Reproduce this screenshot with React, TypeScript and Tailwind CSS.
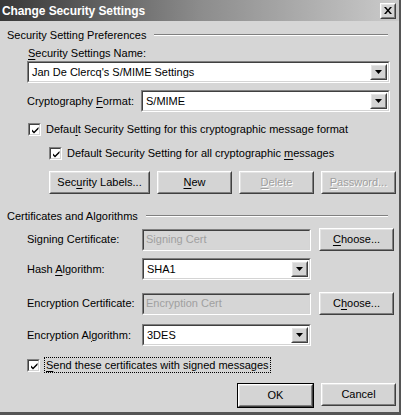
import React from "react";

const font = { fontFamily: '"Liberation Sans", Arial, sans-serif' };

function U({ children }: { children: React.ReactNode }) {
  return <span className="underline underline-offset-[2px]">{children}</span>;
}

function Sunken({ className = "", children }: { className?: string; children?: React.ReactNode }) {
  return (
    <div className={`border border-t-[#808080] border-l-[#808080] border-b-white border-r-white ${className}`}>
      <div className="h-full w-full border border-t-[#404040] border-l-[#404040] border-b-[#d4d4d4] border-r-[#d4d4d4]">
        {children}
      </div>
    </div>
  );
}

function Raised({ className = "", children }: { className?: string; children?: React.ReactNode }) {
  return (
    <div className={`border border-t-white border-l-white border-b-[#404040] border-r-[#404040] ${className}`}>
      <div className="flex h-full w-full items-center justify-center border border-t-[#e4e4e4] border-l-[#e4e4e4] border-b-[#808080] border-r-[#808080] bg-[#d4d4d4]">
        {children}
      </div>
    </div>
  );
}

function Arrow() {
  return (
    <Raised className="h-full w-[17px] shrink-0">
      <svg width="7" height="4" viewBox="0 0 7 4">
        <path d="M0 0h7L3.5 4z" fill="#000" />
      </svg>
    </Raised>
  );
}

function Select({ value, className = "" }: { value: string; className?: string }) {
  return (
    <Sunken className={`h-[22px] bg-white ${className}`}>
      <div className="flex h-full items-center">
        <span className="flex-1 pl-[3px] text-[11px] text-black">{value}</span>
        <div className="h-full py-px pr-px">
          <Arrow />
        </div>
      </div>
    </Sunken>
  );
}

function Check() {
  return (
    <Sunken className="h-[13px] w-[13px] shrink-0 bg-white">
      <svg width="11" height="11" viewBox="0 0 11 11" className="block">
        <path d="M2 4.5l2 2 4.5-4.5v2l-4.5 4.5-2-2z" fill="#000" />
      </svg>
    </Sunken>
  );
}

function Btn({ children, disabled, className = "" }: { children: React.ReactNode; disabled?: boolean; className?: string }) {
  return (
    <Raised className={`h-[23px] w-[75px] ${className}`}>
      <span className={`text-[11px] ${disabled ? "text-[#a0a0a0] [text-shadow:1px_1px_0_#fff]" : "text-black"}`}>
        {children}
      </span>
    </Raised>
  );
}

function Group({ title }: { title: string }) {
  return (
    <div className="flex h-[14px] items-center gap-[8px] pl-[7px] pr-[11px]">
      <span className="text-[11px] text-black">{title}</span>
      <div className="h-[2px] flex-1 border-t border-t-[#808080] border-b border-b-white" />
    </div>
  );
}

export default function App() {
  return (
    <div style={font} className="flex h-[415px] w-[401px] flex-col bg-[#d6d6d6] border-r-[2px] border-r-[#555] border-b-[3px] border-b-[#555]">
      <div className="flex h-[21px] shrink-0 items-center justify-between bg-gradient-to-r from-[#383838] via-[#8c8c8c] to-[#cbcbcb] pl-[2px] pr-[3px]">
        <span className="text-[12px] font-bold tracking-[-0.1px] text-white">Change Security Settings</span>
        <Raised className="h-[16px] w-[16px]">
          <svg width="8" height="7" viewBox="0 0 8 7">
            <path d="M0 0h2l2 2.5L6 0h2L5 3.5 8 7H6L4 4.5 2 7H0l3-3.5z" fill="#000" />
          </svg>
        </Raised>
      </div>

      <div className="mt-[7px]">
        <Group title="Security Setting Preferences" />
      </div>

      <div className="mt-[4px] h-[14px] pl-[28px] text-[11px] leading-[14px] text-black">
        <U>S</U>ecurity Settings Name:
      </div>
      <Select value="Jan De Clercq's S/MIME Settings" className="ml-[27px] mr-[9px] mt-[1px]" />

      <div className="ml-[27px] mr-[9px] mt-[7px] flex items-center">
        <span className="w-[114px] text-[11px] text-black">
          Cryptography <U>F</U>ormat:
        </span>
        <Select value="S/MIME" className="flex-1" />
      </div>

      <div className="ml-[28px] mt-[10px] flex h-[14px] items-center gap-[5px]">
        <Check />
        <span className="text-[11px] text-black">
          Defau<U>l</U>t Security Setting for this cryptographic message format
        </span>
      </div>
      <div className="ml-[49px] mt-[10px] flex h-[14px] items-center gap-[5px]">
        <Check />
        <span className="text-[11px] text-black">
          Default Security Setting for all cryptographic <U>m</U>essages
        </span>
      </div>

      <div className="ml-[49px] mt-[11px] flex gap-[7px]">
        <Btn className="w-[101px]">
          Sec<U>u</U>rity Labels...
        </Btn>
        <Btn>
          <U>N</U>ew
        </Btn>
        <Btn disabled>
          <U>D</U>elete
        </Btn>
        <Btn disabled>
          <U>P</U>assword...
        </Btn>
      </div>

      <div className="mt-[15px]">
        <Group title="Certificates and Algorithms" />
      </div>

      <div className="ml-[27px] mt-[5px] flex items-center">
        <span className="w-[115px] text-[11px] text-black">Signing Certificate:</span>
        <Sunken className="h-[22px] w-[169px]">
          <div className="flex h-full items-center pl-[2px] text-[11px] text-[#a0a0a0]">Signing Cert</div>
        </Sunken>
        <Btn className="ml-[8px]">
          <U>C</U>hoose...
        </Btn>
      </div>

      <div className="ml-[27px] mt-[7px] flex items-center">
        <span className="w-[115px] text-[11px] text-black">
          Hash <U>A</U>lgorithm:
        </span>
        <Select value="SHA1" className="w-[169px]" />
      </div>

      <div className="ml-[27px] mt-[12px] flex items-center">
        <span className="w-[115px] text-[11px] text-black">Encryption Certificate:</span>
        <Sunken className="h-[22px] w-[169px]">
          <div className="flex h-full items-center pl-[2px] text-[11px] text-[#a0a0a0]">Encryption Cert</div>
        </Sunken>
        <Btn className="ml-[8px]">
          C<U>h</U>oose...
        </Btn>
      </div>

      <div className="ml-[27px] mt-[9px] flex items-center">
        <span className="w-[115px] text-[11px] text-black">
          Encryption Al<U>g</U>orithm:
        </span>
        <Select value="3DES" className="w-[169px]" />
      </div>

      <div className="ml-[27px] mt-[11px] flex h-[16px] items-center gap-[4px]">
        <Check />
        <span className="border border-dotted border-black px-px text-[11px] leading-[14px] text-black">
          <U>S</U>end these certificates with signed messages
        </span>
      </div>

      <div className="ml-[237px] mt-[10px] flex gap-[7px]">
        <div className="border border-black">
          <Btn className="h-[21px] w-[73px]">OK</Btn>
        </div>
        <Btn>Cancel</Btn>
      </div>
    </div>
  );
}
